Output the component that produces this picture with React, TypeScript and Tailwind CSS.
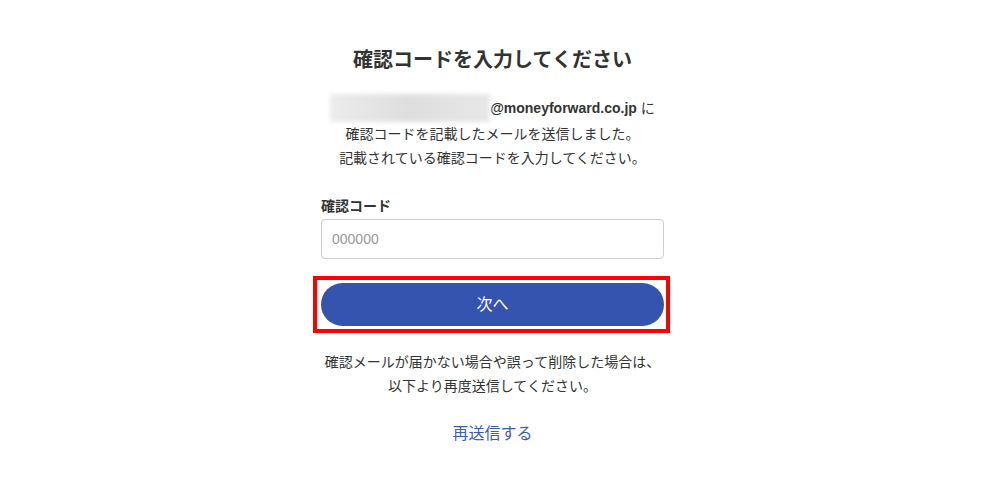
import React from "react";

export default function App() {
  return (
    <div
      className="w-full min-h-[484px] bg-white text-[#333] pl-[2px]"
      style={{ fontFamily: '"Liberation Sans", "Noto Sans CJK JP", sans-serif' }}
    >
      <div className="w-[343px] mx-auto pt-[45px] flex flex-col items-stretch">
        <h1 className="text-[20px] font-bold leading-[30px] text-center text-[#333]">
          確認コードを入力してください
        </h1>
        <div className="mt-[19px] text-[14px] text-center">
          <div className="h-[28px] flex items-center justify-center">
            <span className="inline-block w-[160px] h-[28px] bg-gradient-to-r from-[#ececec] via-[#dedede] to-[#e8e8e8] blur-[2px]" />
            <span className="font-bold">@moneyforward.co.jp</span>
            <span className="ml-[4px]">に</span>
          </div>
          <div className="leading-[24px]">確認コードを記載したメールを送信しました。</div>
          <div className="leading-[24px]">記載されている確認コードを入力してください。</div>
        </div>
        <label className="mt-[26px] text-[14px] font-bold leading-[20px]">確認コード</label>
        <input
          className="mt-[3px] h-[40px] w-full rounded-[4px] border border-[#cccccc] px-[10px] text-[14px] placeholder:text-[#999] outline-none"
          placeholder="000000"
        />
        <div className="relative mt-[24px]">
          <button className="w-full h-[43px] rounded-full bg-[#3454b0] text-white text-[16px]">
            次へ
          </button>
          <div className="absolute -left-[8px] -right-[6px] -top-[7px] -bottom-[7px] border-4 border-[#ff0000] pointer-events-none" />
        </div>
        <div className="mt-[24px] text-[14px] leading-[24px] text-center">
          <div>確認メールが届かない場合や誤って削除した場合は、</div>
          <div>以下より再度送信してください。</div>
        </div>
        <div className="mt-[24px] text-center text-[16px] leading-[24px]">
          <a className="text-[#3b5cb8] cursor-pointer">再送信する</a>
        </div>
      </div>
    </div>
  );
}
